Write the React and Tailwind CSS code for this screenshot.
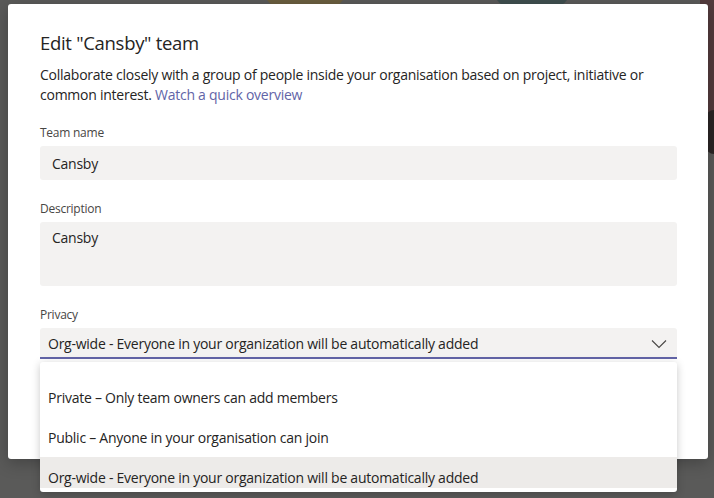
const font = { fontFamily: "'Open Sans', 'Noto Sans', sans-serif" };

function Chevron() {
  return (
    <svg width="16" height="10" viewBox="0 0 16 10" fill="none">
      <path d="M1 1.5 L8 8.5 L15 1.5" stroke="#484644" strokeWidth="1.1" />
    </svg>
  );
}

function Field({ label, children }) {
  return (
    <div className="flex flex-col gap-[5px]">
      <div className="text-[12px] leading-[16px] text-[#484644]">{label}</div>
      {children}
    </div>
  );
}

export default function App() {
  return (
    <div
      className="relative w-[714px] h-[498px] overflow-hidden bg-[#5a5a59] text-[#252423] tracking-[-0.25px]"
      style={font}
    >
      {/* dimmed app content behind the modal overlay */}
      <div className="absolute left-[262px] top-[-40px] w-[86px] h-[50px] rounded-full bg-[#6b5e3f]" />
      <div className="absolute left-[492px] top-[-40px] w-[80px] h-[50px] rounded-full bg-[#3f4f4f]" />
      <div className="absolute left-[700px] top-[0px] w-[40px] h-[140px] bg-[#533b3d]" />
      <div className="absolute left-[706px] top-[110px] w-[16px] h-[44px] rounded-full bg-[#2a2525]" />

      <div className="relative pt-[4px] pl-[8px]">
        <div className="w-[700px] h-[455px] bg-white rounded-[3px] shadow-[0_4px_16px_rgba(0,0,0,0.25)] pl-[32px] pr-[31px] pt-[26px] flex flex-col">
          <h1 className="text-[18.5px] leading-[26px] font-normal tracking-[-0.3px]">Edit "Cansby" team</h1>
          <p className="mt-[9px] text-[14px] leading-[20px]">
            Collaborate closely with a group of people inside your organisation based on project, initiative or
            <br />
            common interest. <span className="text-[#6264a7]">Watch a quick overview</span>
          </p>

          <div className="mt-[20px] flex flex-col gap-[21px]">
            <Field label="Team name">
              <div className="h-[34px] rounded-[3px] bg-[#f3f2f1] pl-[12px] flex items-center text-[14px]">Cansby</div>
            </Field>
            <Field label="Description">
              <div className="h-[64px] rounded-[3px] bg-[#f3f2f1] pl-[12px] pt-[6px] text-[14px] leading-[20px]">
                Cansby
              </div>
            </Field>
            <Field label="Privacy">
              <div className="h-[31px] rounded-t-[3px] bg-[#f3f2f1] border-b-2 border-[#6264a7] pl-[8px] pr-[10px] pt-[2px] flex items-center justify-between text-[14px]">
                <span>Org-wide - Everyone in your organization will be automatically added</span>
                <Chevron />
              </div>
            </Field>
          </div>
        </div>
      </div>

      {/* open dropdown list */}
      <div className="absolute left-[40px] top-[362px] w-[637px] h-[130px] bg-white rounded-[3px] shadow-[0_2px_8px_rgba(0,0,0,0.22)] pt-[15px] pb-[4px] text-[14px]">
        <div className="h-[111px] overflow-hidden flex flex-col">
          <div className="shrink-0 h-[40px] flex items-center pl-[8px]">Private – Only team owners can add members</div>
          <div className="shrink-0 h-[40px] flex items-center pl-[8px]">Public – Anyone in your organisation can join</div>
          <div className="shrink-0 h-[40px] flex items-center pl-[8px] bg-[#edebe9]">
            Org-wide - Everyone in your organization will be automatically added
          </div>
        </div>
      </div>
    </div>
  );
}
